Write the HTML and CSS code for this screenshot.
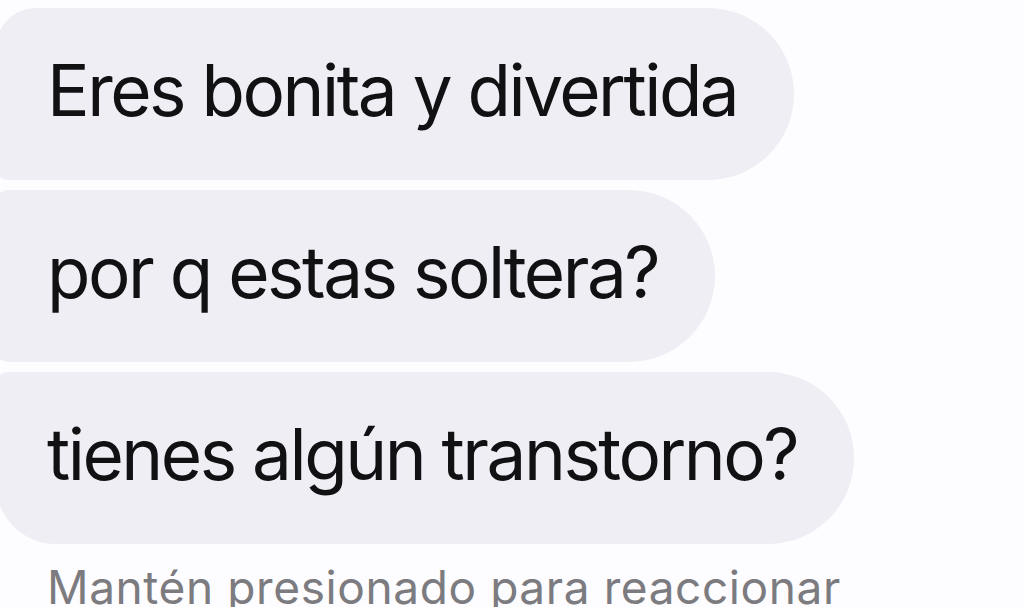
FILE: index.html
```html
<!DOCTYPE html>
<html lang="es">
<head>
<meta charset="utf-8">
<link rel="stylesheet" href="styles.css">
</head>
<body>
<main class="thread">
  <div class="bubble first">Eres bonita y divertida</div>
  <div class="bubble middle">por q estas soltera?</div>
  <div class="bubble last">tienes algún transtorno?</div>
  <p class="hint">Mantén presionado para reaccionar</p>
</main>
</body>
</html>
```
FILE: styles.css
```css
html, body {
  margin: 0;
  padding: 0;
  background: #fdfcfe;
  overflow: hidden;
}
.thread {
  display: flex;
  flex-direction: column;
  align-items: flex-start;
  gap: 10px;
  padding-top: 8px;
  margin-left: -4px;
  font-family: Inter, "Noto Sans", sans-serif;
}
.bubble {
  box-sizing: border-box;
  height: 172px;
  display: flex;
  align-items: center;
  padding: 0 57px 8px 51px;
  background: #eeeef4;
  color: #111113;
  font-size: 71px;
  letter-spacing: -2.5px;
  white-space: nowrap;
  border-radius: 12px 86px 86px 12px;
}
.bubble.first {
  border-top-left-radius: 40px;
}
.bubble.last {
  border-bottom-left-radius: 60px;
}
.hint {
  margin: 10px 0 0 51px;
  color: #7b7b80;
  font-size: 46px;
  letter-spacing: 0.6px;
  line-height: 1;
  white-space: nowrap;
}
```
